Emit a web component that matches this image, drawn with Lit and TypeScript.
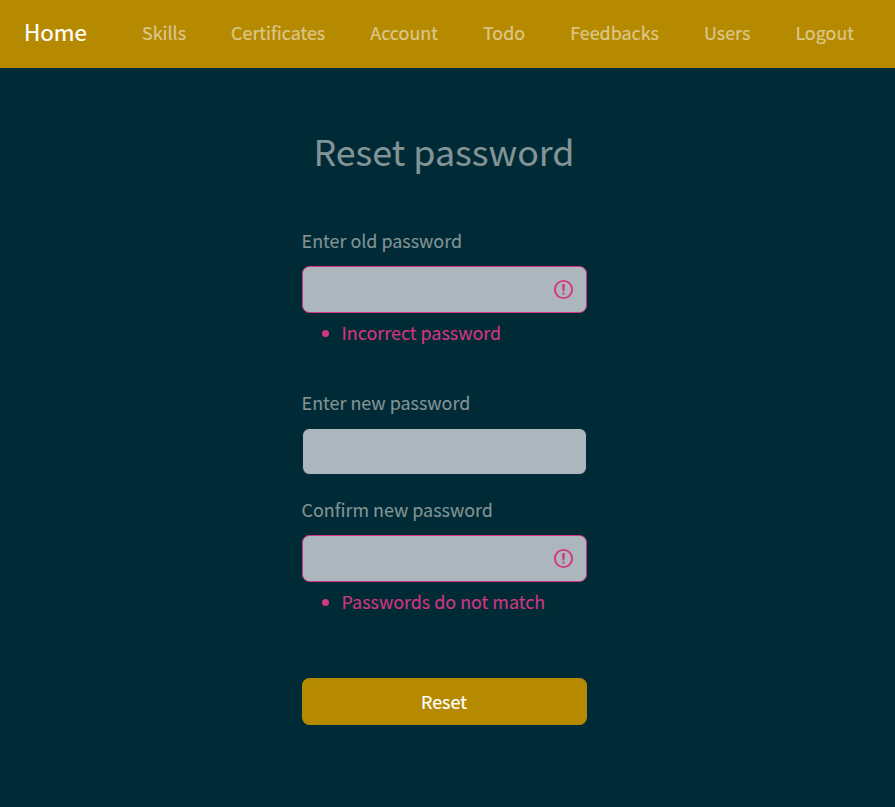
import { LitElement, html, css, nothing } from "lit";
import { customElement, property } from "lit/decorators.js";

@customElement("nav-bar")
class NavBar extends LitElement {
  static styles = css`
    :host { display: block; }
    .bar { display: flex; align-items: center; height: 68px; box-sizing: border-box; background: #b58900; padding: 0 41px 4px 24px; line-height: 30px; }
    .brand { color: #fff; font-size: 22.4px; margin-right: 55px; padding-bottom: 2px; }
    .links { flex: 1; display: flex; justify-content: space-between; }
    .link { color: rgba(255, 255, 255, 0.5); font-size: 17.9px; }
    .brand, .link { white-space: nowrap; text-decoration: none; -webkit-text-stroke: 0.2px; }
  `;
  links = ["Skills", "Certificates", "Account", "Todo", "Feedbacks", "Users", "Logout"];
  render() {
    return html`<nav class="bar">
      <a class="brand">Home</a>
      <div class="links">${this.links.map((l) => html`<a class="link">${l}</a>`)}</div>
    </nav>`;
  }
}

@customElement("password-field")
class PasswordField extends LitElement {
  @property() label = "";
  @property() error = "";
  static styles = css`
    :host { display: block; }
    .label { display: block; line-height: 30px; height: 30px; margin: 0 0 11px -0.4px; color: #839496; }
    .box { height: 47px; box-sizing: border-box; border: 1px solid #002b36; border-radius: 7.5px; background: #adb5bd; display: flex; align-items: center; justify-content: flex-end; padding-right: 11px; }
    .box.invalid { border-color: #d33682; }
    .icon { width: 23px; height: 23px; fill: none; stroke: #d33682; display: block; }
    .errors { margin: 4px 0 0; padding: 0; list-style: none; color: #d33682; line-height: 30px; }
    .error { display: flex; align-items: center; padding-left: 20px; }
    .error::before { content: ""; width: 7px; height: 7px; border-radius: 50%; background: #d33682; margin: 2px 12.6px 0 0; }
  `;
  render() {
    return html`<label class="label">${this.label}</label>
      <div class="box ${this.error ? "invalid" : ""}">
        ${this.error
          ? html`<svg class="icon" viewBox="0 0 12 12"><circle cx="6" cy="6" r="4.5" /><path stroke-linejoin="round" d="M5.8 3.6h.4L6 6.5z" /><circle cx="6" cy="8.2" r=".6" fill="#d33682" stroke="none" /></svg>`
          : nothing}
      </div>
      ${this.error ? html`<ul class="errors"><li class="error">${this.error}</li></ul>` : nothing}`;
  }
}

@customElement("app-root")
class AppRoot extends LitElement {
  static styles = css`
    :host { display: block; height: 807px; overflow: hidden; background: #002b36; font-family: "Noto Sans CJK SC", "Open Sans", sans-serif; font-size: 17.9px; color: #839496; -webkit-text-stroke: 0.1px; }
    .form { width: 285px; margin: 58px 0 0 302px; }
    .title { margin: 0 0 0 -1px; font-size: 35.8px; font-weight: 400; line-height: 48px; text-align: center; white-space: nowrap; }
    .first { margin-top: 51px; }
    .second { margin-top: 40px; }
    .third { margin-top: 19px; }
    .button { display: block; width: 100%; height: 47px; margin-top: 62px; border: 0; border-radius: 7.5px; background: #b58900; color: #fff; font: inherit; line-height: 30px; padding: 0 1px 2px 0; -webkit-text-stroke: 0.2px; }
  `;
  render() {
    return html`<nav-bar></nav-bar>
      <main class="form">
        <h1 class="title">Reset password</h1>
        <password-field class="first" label="Enter old password" error="Incorrect password"></password-field>
        <password-field class="second" label="Enter new password"></password-field>
        <password-field class="third" label="Confirm new password" error="Passwords do not match"></password-field>
        <button class="button">Reset</button>
      </main>`;
  }
}
